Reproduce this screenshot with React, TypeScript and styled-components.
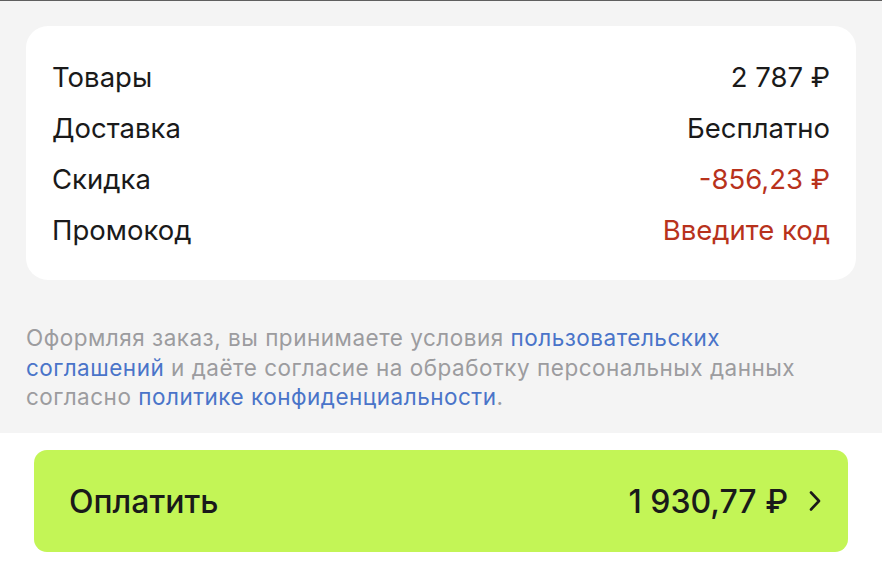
import React from "react";
import styled, { createGlobalStyle } from "styled-components";

const Global = createGlobalStyle`
  html, body { margin: 0; padding: 0; background: #ffffff; }
  body { font-family: Inter, "Noto Sans", sans-serif; -webkit-font-smoothing: antialiased; }
  * { box-sizing: border-box; }
`;

const Page = styled.div`
  width: 882px;
  height: 577px;
  display: flex;
  flex-direction: column;
  background: #ffffff;
  border-top: 1px solid #5f5f5f;
  overflow: hidden;
`;

const GreySection = styled.section`
  background: #f4f4f4;
  padding: 25px 26px 0 26px;
  height: 432px;
  display: flex;
  flex-direction: column;
`;

const SummaryCard = styled.div`
  background: #ffffff;
  border-radius: 22px;
  padding: 25px 26px 0 26px;
  height: 254px;
  display: flex;
  flex-direction: column;
`;

const Row = styled.div`
  display: flex;
  justify-content: space-between;
  align-items: center;
  height: 51px;
  font-size: 27.5px;
  color: #1a1a1a;
`;

const Value = styled.span<{ $accent?: boolean }>`
  color: ${(p) => (p.$accent ? "#b8321c" : "#1a1a1a")};
`;

const Disclaimer = styled.p`
  margin: 43px 0 0 0;
  width: 785px;
  font-size: 22.5px;
  line-height: 29.5px;
  letter-spacing: 0.5px;
  color: #9c9c9f;
`;

const Link = styled.span`
  color: #4a74c9;
`;

const BottomSection = styled.section`
  padding: 17px 34px 0 34px;
`;

const PayButton = styled.button`
  width: 814px;
  height: 102px;
  border: none;
  border-radius: 13px;
  background: #c3f556;
  display: flex;
  align-items: center;
  justify-content: space-between;
  padding: 0 26px 0 35px;
  font-family: Inter, "Noto Sans", sans-serif;
  font-size: 32px;
  font-weight: 500;
  color: #1a1a1a;
  cursor: pointer;
`;

const PayRight = styled.span`
  display: flex;
  align-items: center;
  gap: 20px;
`;

const Chevron = () => (
  <svg width="14" height="24" viewBox="0 0 14 24" fill="none">
    <path d="M3 3.5 L11 12 L3 20.5" stroke="#1a1a1a" strokeWidth="2.6" strokeLinecap="round" strokeLinejoin="round" />
  </svg>
);

const rows: { label: string; value: string; accent?: boolean }[] = [
  { label: "Товары", value: "2 787 ₽" },
  { label: "Доставка", value: "Бесплатно" },
  { label: "Скидка", value: "-856,23 ₽", accent: true },
  { label: "Промокод", value: "Введите код", accent: true },
];

export default function App() {
  return (
    <>
      <Global />
      <Page>
        <GreySection>
          <SummaryCard>
            {rows.map((r) => (
              <Row key={r.label}>
                <span>{r.label}</span>
                <Value $accent={r.accent}>{r.value}</Value>
              </Row>
            ))}
          </SummaryCard>
          <Disclaimer>
            Оформляя заказ, вы принимаете условия <Link>пользовательских соглашений</Link> и даёте согласие на обработку персональных данных согласно <Link>политике конфиденциальности</Link>.
          </Disclaimer>
        </GreySection>
        <BottomSection>
          <PayButton>
            <span>Оплатить</span>
            <PayRight>
              <span>1 930,77 ₽</span>
              <Chevron />
            </PayRight>
          </PayButton>
        </BottomSection>
      </Page>
    </>
  );
}
